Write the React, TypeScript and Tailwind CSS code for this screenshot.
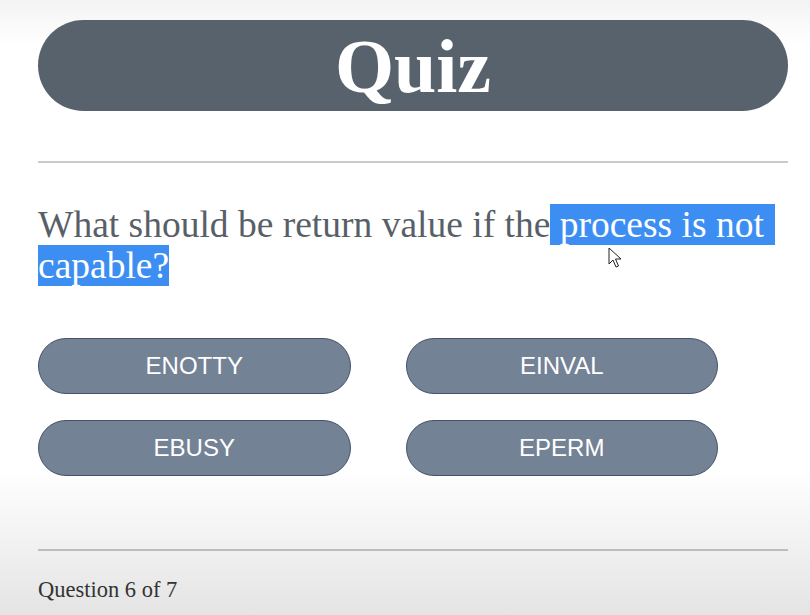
const answers = ["ENOTTY", "EINVAL", "EBUSY", "EPERM"];

function Cursor() {
  return (
    <svg
      className="absolute left-[608px] top-[247px]"
      width="15"
      height="22"
      viewBox="0 0 15 22"
    >
      <path
        d="M1 1 L1 17 L5 13 L8 20 L10.5 19 L7.5 12 L13 12 Z"
        fill="#ffffff"
        stroke="#222"
        strokeWidth="1"
        strokeLinejoin="round"
      />
    </svg>
  );
}

export default function App() {
  return (
    <div className="relative h-[615px] w-[810px] overflow-hidden bg-[linear-gradient(to_bottom,#f3f3f3_0px,#ffffff_45px,#ffffff_470px,#e4e4e4_615px)] pl-[38px] pr-[22px] pt-[20px]">
      {/* header */}
      <div className="flex h-[91px] items-center justify-center rounded-full bg-[#57626d]">
        <h1 className="font-['Liberation_Serif',serif] text-[76px] leading-none font-bold text-white">
          Quiz
        </h1>
      </div>

      <hr className="mt-[50px] border-t-2 border-[#cacaca]" />

      {/* question, part of it selected */}
      <p className="mt-[41px] font-['Liberation_Serif',serif] text-[37.5px] leading-[41px] text-[#585f68]">
        What should be return value if the
        <span className="bg-[#3d8ef2] pr-[11px] text-white"> process is not</span>
        <br />
        <span className="bg-[#3d8ef2] text-white">capable?</span>
      </p>

      {/* answers */}
      <div className="mt-[52px] grid w-[680px] grid-cols-2 gap-x-[55px] gap-y-[26px]">
        {answers.map((a) => (
          <button
            key={a}
            className="h-[56px] rounded-full border border-[#45526a] bg-[#738294] font-['Liberation_Sans',Arial,sans-serif] text-[24px] text-white"
          >
            {a}
          </button>
        ))}
      </div>

      <hr className="mt-[73px] border-t-2 border-[#bdbdbd]" />

      <div className="mt-[22px] font-['Liberation_Serif',serif] text-[22.5px] text-[#333]">
        Question 6 of 7
      </div>

      <Cursor />
    </div>
  );
}
